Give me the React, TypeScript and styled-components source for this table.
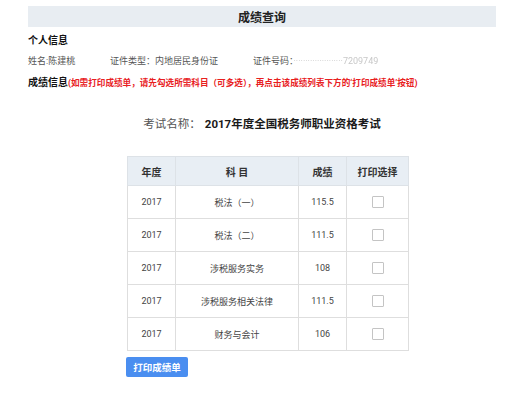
import React from "react";
import styled, { createGlobalStyle } from "styled-components";

const GlobalStyle = createGlobalStyle`
  html, body {
    margin: 0;
    padding: 0;
    background: #ffffff;
  }
  body {
    font-family: Roboto, "Noto Sans CJK SC", sans-serif;
    color: #333;
  }
`;

const Page = styled.div`
  width: 468px;
  padding: 6px 0 0 28px;
`;

const TitleBar = styled.div`
  height: 21px;
  background: #e8edf2;
  display: flex;
  align-items: center;
  justify-content: center;
  font-size: 12px;
  font-weight: 700;
  color: #222;
`;

const SectionTitle = styled.div`
  margin-top: 6px;
  font-size: 10px;
  font-weight: 700;
  color: #111;
  line-height: 16px;
`;

const InfoRow = styled.div`
  display: flex;
  margin-top: 6px;
  font-size: 9px;
  line-height: 12px;
  color: #555;
`;

const InfoItem = styled.span<{ $w?: number }>`
  width: ${(p) => (p.$w ? `${p.$w}px` : "auto")};
  flex-shrink: 0;
`;

const Masked = styled.span`
  color: #c8c8c8;
  filter: blur(0.4px);
`;

const ScoreHead = styled.div`
  margin-top: 8px;
  display: flex;
  align-items: baseline;
  line-height: 16px;
`;

const ScoreTitle = styled.span`
  font-size: 10px;
  font-weight: 700;
  color: #111;
`;

const Notice = styled.span`
  font-size: 8.6px;
  font-weight: 700;
  color: #e8201e;
  white-space: nowrap;
`;

const ExamName = styled.div`
  margin-top: 24px;
  text-align: center;
  font-size: 11.5px;
  line-height: 18px;
  color: #555;
`;

const ExamValue = styled.span`
  font-weight: 700;
  color: #1a1a1a;
  margin-left: 4px;
`;

const Table = styled.table`
  margin: 23px 0 0 99px;
  border-collapse: collapse;
  table-layout: fixed;
  width: 277px;
  font-size: 9px;
  color: #444;
`;

const Th = styled.th<{ $w: number }>`
  width: ${(p) => p.$w}px;
  height: 28px;
  padding: 0;
  background: #e8eef4;
  border: 1px solid #dde2e7;
  font-size: 10px;
  font-weight: 600;
  color: #333;
  text-align: center;
`;

const Td = styled.td`
  height: 32px;
  padding: 0;
  border: 1px solid #dedede;
  text-align: center;
`;

const Check = styled.span`
  display: inline-block;
  width: 10px;
  height: 10px;
  border: 1px solid #c4c4c4;
  border-radius: 1px;
  vertical-align: middle;
  background: #fff;
`;

const PrintButton = styled.button`
  margin: 6px 0 0 98px;
  width: 62px;
  height: 20px;
  border: none;
  border-radius: 2px;
  background: #4a8ef0;
  color: #fff;
  font-family: "Noto Sans CJK SC", sans-serif;
  font-size: 9.5px;
  font-weight: 700;
  padding: 0;
`;

const scores = [
  { year: "2017", subject: "税法（一）", score: "115.5" },
  { year: "2017", subject: "税法（二）", score: "111.5" },
  { year: "2017", subject: "涉税服务实务", score: "108" },
  { year: "2017", subject: "涉税服务相关法律", score: "111.5" },
  { year: "2017", subject: "财务与会计", score: "106" },
];

export default function App() {
  return (
    <>
      <GlobalStyle />
      <Page>
        <TitleBar>成绩查询</TitleBar>
        <SectionTitle>个人信息</SectionTitle>
        <InfoRow>
          <InfoItem $w={82}>姓名:陈建桃</InfoItem>
          <InfoItem $w={143}>证件类型：内地居民身份证</InfoItem>
          <InfoItem>
            证件号码：<Masked>·····················7209749</Masked>
          </InfoItem>
        </InfoRow>
        <ScoreHead>
          <ScoreTitle>成绩信息</ScoreTitle>
          <Notice>(如需打印成绩单，请先勾选所需科目（可多选），再点击该成绩列表下方的‘打印成绩单’按钮)</Notice>
        </ScoreHead>
        <ExamName>
          考试名称：<ExamValue>2017年度全国税务师职业资格考试</ExamValue>
        </ExamName>
        <Table>
          <thead>
            <tr>
              <Th $w={47}>年度</Th>
              <Th $w={122}>科 目</Th>
              <Th $w={47}>成绩</Th>
              <Th $w={61}>打印选择</Th>
            </tr>
          </thead>
          <tbody>
            {scores.map((row) => (
              <tr key={row.subject}>
                <Td>{row.year}</Td>
                <Td>{row.subject}</Td>
                <Td>{row.score}</Td>
                <Td>
                  <Check />
                </Td>
              </tr>
            ))}
          </tbody>
        </Table>
        <PrintButton>打印成绩单</PrintButton>
      </Page>
    </>
  );
}
